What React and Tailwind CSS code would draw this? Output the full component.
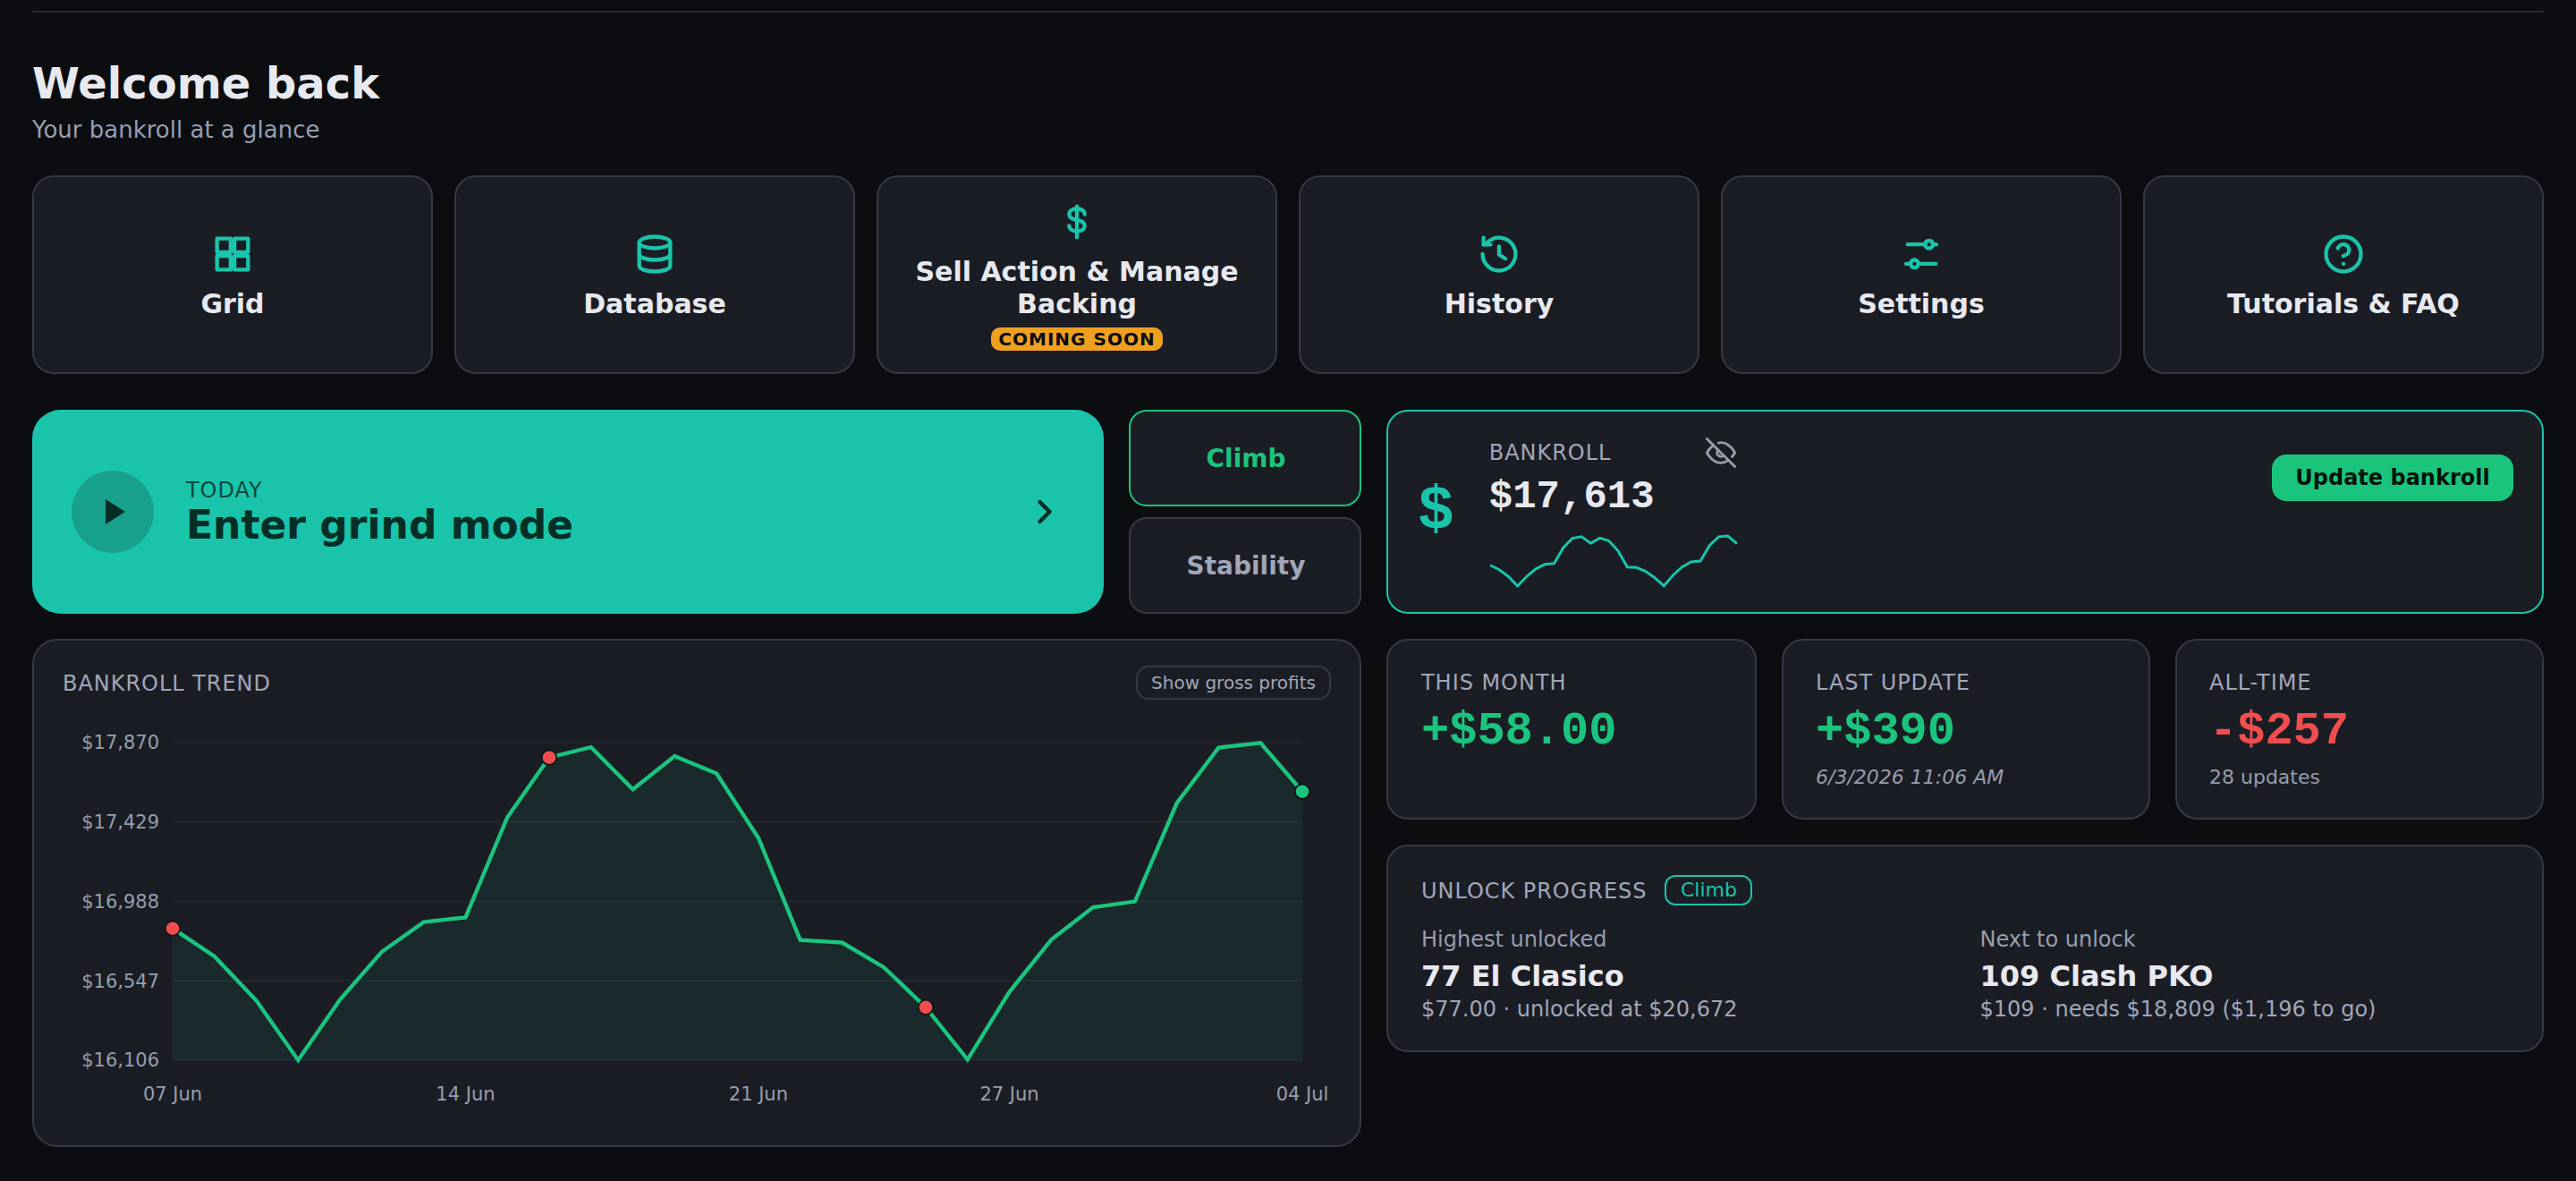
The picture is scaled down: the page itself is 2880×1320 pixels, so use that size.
const tiles = [
  { label: 'Grid', icon: 'grid' },
  { label: 'Database', icon: 'database' },
  { label: 'Sell Action & Manage Backing', icon: 'dollar', soon: true },
  { label: 'History', icon: 'history' },
  { label: 'Settings', icon: 'sliders' },
  { label: 'Tutorials & FAQ', icon: 'help' },
];

const icons = {
  grid: (
    <>
      <rect x="4" y="4" width="7" height="7" />
      <rect x="13" y="4" width="7" height="7" />
      <rect x="4" y="13" width="7" height="7" />
      <rect x="13" y="13" width="7" height="7" />
    </>
  ),
  database: (
    <>
      <ellipse cx="12" cy="6" rx="8" ry="3" />
      <path d="M4 6v6c0 1.66 3.58 3 8 3s8-1.34 8-3V6" />
      <path d="M4 12v6c0 1.66 3.58 3 8 3s8-1.34 8-3v-6" />
    </>
  ),
  dollar: (
    <>
      <path d="M12 4v16" />
      <path d="M16 8C16 6.3 14.2 5.2 12 5.2S8 6.3 8 8.1S9.6 10.6 12 11S16 12.2 16 14S14.2 16.8 12 16.8S8 15.7 8 14" />
    </>
  ),
  history: (
    <>
      <path d="M3.5 12a8.5 8.5 0 1 0 2.6-6.1L4 7.1" />
      <path d="M4 3.5v3.6h3.6" />
      <path d="M12 8v4.3l3.2 2" />
    </>
  ),
  sliders: (
    <>
      <path d="M5 7h9M18 7h1.8M4.2 17h2.3M10.5 17h9" />
      <circle cx="16" cy="7" r="2" />
      <circle cx="8.5" cy="17" r="2" />
    </>
  ),
  help: (
    <>
      <circle cx="12" cy="12" r="9" />
      <path d="M9.09 9a3 3 0 0 1 5.83 1c0 2-3 3-3 3" />
      <path d="M12 17h.01" />
    </>
  ),
};

// Daily bankroll, as offsets from the chart's top gridline (0 = max, 355 = min)
const trend = [
  207.7, 239, 288.3, 355, 287.3, 233.8, 200.6, 195.4, 83.5, 16.7, 5.2, 52.3, 15.1, 34.5,
  106.5, 220.7, 223.5, 251.2, 295.9, 354.3, 278.5, 220.3, 184, 177.6, 67.7, 5.6, 0.2, 54.7,
];

const CHART = { left: 123, right: 1386, top: 32, height: 355 };
const chartX = (i) => CHART.left + (i * (CHART.right - CHART.left)) / (trend.length - 1);
const chartY = (v) => CHART.top + v;

const yLabels = ['$17,870', '$17,429', '$16,988', '$16,547', '$16,106'];
const xLabels = [
  { i: 0, text: '07 Jun' },
  { i: 7, text: '14 Jun' },
  { i: 14, text: '21 Jun' },
  { i: 20, text: '27 Jun' },
  { i: 27, text: '04 Jul' },
];
const markers = [
  { i: 0, color: '#f04e4e' },
  { i: 9, color: '#f04e4e' },
  { i: 18, color: '#f04e4e' },
  { i: 27, color: '#1bc47d' },
];

const stats = [
  { label: 'THIS MONTH', value: '+$58.00', up: true },
  { label: 'LAST UPDATE', value: '+$390', up: true, note: '6/3/2026 11:06 AM', italic: true },
  { label: 'ALL-TIME', value: '-$257', up: false, note: '28 updates' },
];

const unlocks = [
  { title: 'Highest unlocked', name: '77 El Clasico', detail: '$77.00 · unlocked at $20,672' },
  { title: 'Next to unlock', name: '109 Clash PKO', detail: '$109 · needs $18,809 ($1,196 to go)' },
];

function TileIcon({ name }) {
  return (
    <svg className="w-[52px] h-[52px] shrink-0 text-[#1ac4aa]" viewBox="0 0 24 24" fill="none" stroke="currentColor"
      strokeWidth="2" strokeLinecap="round" strokeLinejoin="round">
      {icons[name]}
    </svg>
  );
}

function Label({ children }) {
  return <div className="pt-px text-2xl leading-[28px] tracking-[0.96px] text-[#a0a7b8] whitespace-nowrap">{children}</div>;
}

function Sparkline() {
  const points = trend.map((v, i) => `${1 + i * 10.22},${2 + (v / 355) * 56}`).join(' ');
  return (
    <svg className="w-[278px] h-[60px] mt-4" viewBox="0 0 278 60" fill="none">
      <polyline points={points} stroke="#1ac4aa" strokeWidth="3" />
    </svg>
  );
}

function TrendChart() {
  const line = trend.map((v, i) => `${chartX(i)},${chartY(v)}`);
  const bottom = CHART.top + CHART.height;
  const area = [`${CHART.left},${bottom}`, ...line, `${CHART.right},${bottom}`].join(' ');

  return (
    <svg className="block w-[1418px] h-[450px] mt-4 overflow-visible" viewBox="0 0 1418 450" fontSize="21" fill="#969eae">
      {yLabels.map((text, i) => {
        const y = CHART.top + (i * CHART.height) / 4;
        return (
          <g key={text}>
            <line x1={CHART.left} x2={CHART.right} y1={y} y2={y} stroke="#2e3440" strokeOpacity="0.6" strokeWidth="1.6" />
            <text x="108" y={y + 7.4} textAnchor="end">{text}</text>
          </g>
        );
      })}
      <polygon points={area} fill="#1bc47d" fillOpacity="0.08" />
      <polyline points={line.join(' ')} fill="none" stroke="#1bc47d" strokeWidth="4.4" />
      {markers.map((m) => (
        <circle key={m.i} cx={chartX(m.i)} cy={chartY(trend[m.i])} r="8.2" fill={m.color} stroke="#12141a" strokeWidth="1.8" />
      ))}
      {xLabels.map((l) => (
        <text key={l.i} x={chartX(l.i)} y="432" textAnchor="middle">{l.text}</text>
      ))}
    </svg>
  );
}

export default function App() {
  return (
    <div className="w-[2880px] h-[1320px] overflow-hidden bg-[#0b0d11] px-9 text-[#e8e9ee] font-['DejaVu_Sans',sans-serif]">
      <div className="h-[14px] border-b-2 border-[#242931]" />

      <h1 className="mt-[51px] text-[48px] leading-[56px] font-bold">Welcome back</h1>
      <p className="mt-[9px] text-[26px] leading-[30px] text-[#969eae]">Your bankroll at a glance</p>

      {/* Shortcuts */}
      <div className="mt-9 grid grid-cols-6 gap-6">
        {tiles.map((tile) => (
          <button key={tile.label}
            className="h-[222px] flex flex-col items-center justify-center rounded-[24px] border-2 border-[#353946] bg-[#1b1d25] px-6">
            {!tile.soon && <span className="h-[2px]" />}
            <TileIcon name={tile.icon} />
            <span className="mt-3 text-[30px] leading-[36px] font-bold text-center">{tile.label}</span>
            {tile.soon && (
              <span className="mt-2 h-[26px] px-2 rounded-[10px] bg-[#f0a020] text-[20px] leading-[26px] font-bold tracking-[1px] text-[#0b0d11]">
                COMING SOON
              </span>
            )}
          </button>
        ))}
      </div>

      <div className="mt-10 grid grid-cols-[1486px_1294px] gap-7">
        {/* Left column */}
        <div className="flex flex-col gap-7">
          <div className="flex gap-7 h-[228px]">
            <button className="flex-1 flex items-center rounded-[32px] bg-[#1ac4aa] px-11 text-left text-[#052e26]">
              <span className="w-[92px] h-[92px] rounded-full bg-[#17a08c] flex items-center justify-center">
                <svg className="w-12 h-12" viewBox="0 0 24 24" fill="currentColor"><path d="M8 5v14l11-7z" /></svg>
              </span>
              <span className="ml-9 pt-[2px] flex flex-col">
                <span className="text-2xl leading-[27px] tracking-[0.96px] text-[#09493f]">TODAY</span>
                <span className="text-[44px] leading-[50px] font-bold">Enter grind mode</span>
              </span>
              <svg className="ml-auto w-11 h-11" viewBox="0 0 24 24" fill="none" stroke="currentColor" strokeWidth="2.5"
                strokeLinecap="round" strokeLinejoin="round">
                <path d="M9 6l6 6-6 6" />
              </svg>
            </button>
            <div className="w-[260px] flex flex-col gap-3">
              <button className="flex-1 rounded-[20px] border-2 border-[#1bc47d] bg-[#1b1d25] pt-[2px] pl-[2px] text-[28px] font-bold text-[#1bc47d]">Climb</button>
              <button className="flex-1 rounded-[20px] border-2 border-[#353946] bg-[#1b1d25] pt-[2px] pl-[2px] text-[28px] font-bold text-[#a0a7b8]">Stability</button>
            </div>
          </div>

          <div className="rounded-[28px] border-2 border-[#353946] bg-[#1b1d25] px-8 pt-7 pb-8">
            <div className="flex items-center justify-between h-[38px]">
              <Label>BANKROLL TREND</Label>
              <button className="w-[218px] h-[38px] rounded-[14px] border-2 border-[#353946] text-[20px] leading-[35px] text-[#a0a7b8]">
                Show gross profits
              </button>
            </div>
            <TrendChart />
          </div>
        </div>

        {/* Right column */}
        <div className="flex flex-col gap-7">
          <div className="h-[228px] flex items-center rounded-[24px] border-2 border-[#1ac4aa] bg-[#1b1d25] pl-[33px] pr-8">
            <div className="font-['Liberation_Mono',monospace] text-[68px] leading-none font-bold text-[#1ac4aa]">$</div>
            <div className="ml-[39px] w-[276px]">
              <div className="flex items-center justify-between h-9">
                <Label>BANKROLL</Label>
                <svg className="w-[34px] h-[34px] text-[#969eae]" viewBox="0 0 24 24" fill="none" stroke="currentColor" strokeWidth="2"
                  strokeLinecap="round" strokeLinejoin="round">
                  <path d="M17.94 17.94A10.07 10.07 0 0 1 12 20c-7 0-11-8-11-8a18.45 18.45 0 0 1 5.06-5.94" />
                  <path d="M9.9 4.24A9.12 9.12 0 0 1 12 4c7 0 11 8 11 8a18.5 18.5 0 0 1-2.16 3.19" />
                  <path d="M14.12 14.12a3 3 0 1 1-4.24-4.24" />
                  <path d="M1 1l22 22" />
                </svg>
              </div>
              <div className="mt-[5px] font-['Liberation_Mono',monospace] text-[44px] leading-[52px] font-bold">$17,613</div>
              <Sparkline />
            </div>
            <button className="ml-auto mb-[76px] w-[270px] h-[52px] rounded-[16px] bg-[#1bc47d] text-2xl font-bold text-[#04140c]">
              Update bankroll
            </button>
          </div>

          <div className="grid grid-cols-[414px_412px_412px] gap-7">
            {stats.map((s) => (
              <div key={s.label} className="h-[202px] rounded-[24px] border-2 border-[#353946] bg-[#1b1d25] px-9 first:pl-[37px] py-8">
                <Label>{s.label}</Label>
                <div className={`mt-[11px] font-['Liberation_Mono',monospace] text-[52px] leading-[60px] font-bold ${s.up ? 'text-[#1bc47d]' : 'text-[#f04e4e]'}`}>
                  {s.value}
                </div>
                {s.note && (
                  <div className={`mt-2 text-[22px] leading-[26px] text-[#969eae] ${s.italic ? 'italic' : ''}`}>{s.note}</div>
                )}
              </div>
            ))}
          </div>

          <div className="h-[232px] rounded-[24px] border-2 border-[#353946] bg-[#1b1d25] pl-[37px] pr-9 py-8">
            <div className="flex items-center gap-5 h-[34px]">
              <Label>UNLOCK PROGRESS</Label>
              <span className="w-[98px] h-[34px] rounded-[12px] border-2 border-[#1ac4aa] text-center text-[22px] leading-[29px] text-[#1ac4aa]">Climb</span>
            </div>
            <div className="mt-6 grid grid-cols-2 gap-8">
              {unlocks.map((u) => (
                <div key={u.title}>
                  <div className="text-2xl leading-[28px] text-[#969eae]">{u.title}</div>
                  <div className="mt-2 text-[32px] leading-[38px] font-bold">{u.name}</div>
                  <div className="mt-1 text-2xl leading-[28px] text-[#a0a7b8]">{u.detail}</div>
                </div>
              ))}
            </div>
          </div>
        </div>
      </div>
    </div>
  );
}
